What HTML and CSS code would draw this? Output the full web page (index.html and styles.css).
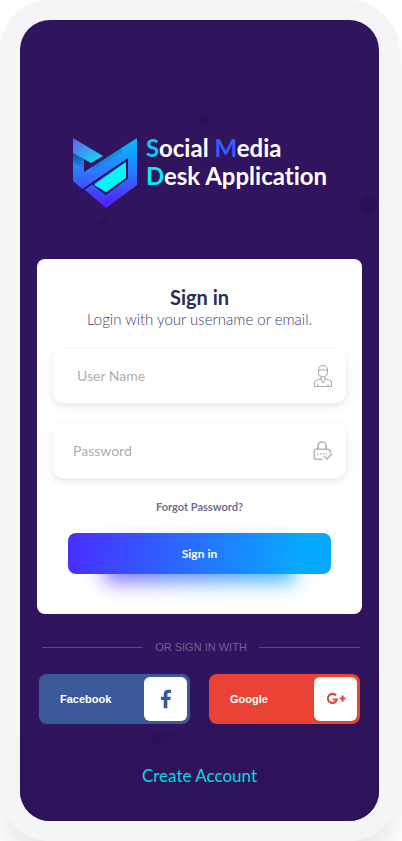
FILE: index.html
```html
<!DOCTYPE html>
<html lang="en">
<head>
<meta charset="utf-8">
<meta name="viewport" content="width=device-width, initial-scale=1">
<title>Sign in</title>
<link rel="stylesheet" href="styles.css">
</head>
<body>
<div class="device">
  <main class="screen">
    <svg class="backdrop" viewBox="0 0 359 801" preserveAspectRatio="none" aria-hidden="true">
      <path d="M0 715Q125 724 235 696T359 650V801H0Z" fill="#2e125a"/>
      <g fill="#2c1057">
        <circle cx="183" cy="100" r="5"/>
        <circle cx="348" cy="185" r="9"/>
        <circle cx="83" cy="202" r="4"/>
        <circle cx="137" cy="719" r="5"/>
      </g>
    </svg>

    <header class="brand">
      <svg class="brand-mark" viewBox="0 0 66 72" aria-hidden="true">
        <defs>
          <linearGradient id="body" gradientUnits="userSpaceOnUse" x1="0" y1="0" x2="0" y2="70">
            <stop offset="0" stop-color="#06bdf8"/>
            <stop offset=".35" stop-color="#1f8eff"/>
            <stop offset=".65" stop-color="#3a5cff"/>
            <stop offset="1" stop-color="#5419ff"/>
          </linearGradient>
          <linearGradient id="wing" x1="0" y1="0" x2="1" y2="1">
            <stop offset=".1" stop-color="#576af2"/>
            <stop offset=".9" stop-color="#12dcf2"/>
          </linearGradient>
          <linearGradient id="shade" gradientUnits="userSpaceOnUse" x1="24" y1="18" x2="30" y2="28">
            <stop offset="0" stop-color="#0f4a86" stop-opacity=".8"/>
            <stop offset="1" stop-color="#0f4a86" stop-opacity="0"/>
          </linearGradient>
          <linearGradient id="shade-left" x1="0" y1="0" x2="0" y2="1">
            <stop offset="0" stop-color="#0f3a80" stop-opacity=".8"/>
            <stop offset="1" stop-color="#0f3a80" stop-opacity="0"/>
          </linearGradient>
        </defs>
        <path d="M1 15L12 21V34L65 0V47L34 70L13 52L9 50L1 43Z" fill="url(#body)"/>
        <path d="M1 15L12 21V31L1 25Z" fill="url(#shade-left)"/>
        <path d="M20 29L50 10V18L20 37Z" fill="url(#shade)"/>
        <path d="M1 0L31 18L19 25L1 15Z" fill="url(#wing)"/>
        <path d="M9 53L55 22V40L34 56L21 46" fill="none" stroke="#281158" stroke-width="2"/>
        <path d="M22 47L54 24V40L34 54Z" fill="#00f8f6"/>
      </svg>
      <h1 class="brand-name"><span class="cyan">S</span>ocial <span class="blue">M</span>edia<br><span class="aqua">D</span>esk Application</h1>
    </header>

    <form class="card">
      <h2 class="card-title">Sign in</h2>
      <p class="card-text">Login with your username or email.</p>

      <label class="field field-user">
        <input type="text" placeholder="User Name" aria-label="User Name" autocomplete="username">
        <svg viewBox="0 0 20 24" aria-hidden="true">
          <path d="M5.500 9V6C5.500 3 7 1.500 10 1.500S14.500 3 14.500 6V9C14.500 11 12.500 13 10 13S5.500 11 5.500 9ZM5.500 6.500C8 5.500 12 5.500 14.500 6.500M8 13V15L10 19L12 15V13M8 15L4 16C2.500 16.500 1.500 17.500 1.500 19V22.500H18.500V19C18.500 17.500 17.500 16.500 16 16L12 15M5 20V22M15 20V22"/>
        </svg>
      </label>

      <label class="field field-pass">
        <input type="password" placeholder="Password" aria-label="Password" autocomplete="current-password">
        <svg class="lock" viewBox="0 0 20 24" aria-hidden="true">
          <path d="M5 10V7C5 4.500 6.700 3 9 3S13 4.500 13 7V10" stroke-width="1.700"/>
          <path d="M17 14V12C17 11 16.200 10.200 15.200 10.200H3C2 10.200 1.200 11 1.200 12V18.500C1.200 19.500 2 20.300 3 20.300H9.500M11 17L14 20.200L19 14.500" stroke-width="1.500"/>
          <path d="M4 15H5.500M7 15H8.500M10 15H11.500M13 15H14" stroke-width="1.500"/>
        </svg>
      </label>

      <a class="forgot" href="#">Forgot Password?</a>
      <button class="submit" type="submit">Sign in</button>
    </form>

    <div class="divider">OR SIGN IN WITH</div>

    <div class="social">
      <button class="social-button facebook" type="button">
        <span>Facebook</span>
        <span class="tile">
          <svg viewBox="0 0 24 24" aria-hidden="true"><path d="M9.500 22V13H6.500V9.500H9.500V7C9.500 3.500 11.500 2 14.500 2H17.500V5.500H15.500C14 5.500 13.500 6.200 13.500 7.500V9.500H17.300L16.700 13H13.500V22Z" fill="#3b5998"/></svg>
        </span>
      </button>
      <button class="social-button google" type="button">
        <span>Google</span>
        <span class="tile">
          <svg viewBox="0 0 24 24" aria-hidden="true"><path d="M12 8.200A5 5 0 1 0 13 12.500H8.500M16 11.500H22.500M19.200 8.200V14.800" fill="none" stroke="#ea4335" stroke-width="2.300"/></svg>
        </span>
      </button>
    </div>

    <a class="create" href="#">Create Account</a>
  </main>
</div>
</body>
</html>
```
FILE: styles.css
```css
* {
  box-sizing: border-box;
}

body {
  margin: 0;
  background: #fff;
  font-family: Lato, "Liberation Sans", sans-serif;
  font-variant-ligatures: none;
}

.device {
  margin-right: 3px;
  padding: 20px;
  border-radius: 50px;
  background: #f3f5f7;
  box-shadow: 0 20px 20px rgba(0, 0, 0, .08);
}

.screen {
  position: relative;
  display: flex;
  flex-direction: column;
  min-height: calc(100vh - 40px);
  padding: 118px 17px 32px;
  overflow: hidden;
  border-radius: 30px;
  background: #30145d;
}

.backdrop {
  position: absolute;
  inset: 0;
  width: 100%;
  height: 100%;
}

.brand,
.card,
.divider,
.social,
.create {
  position: relative;
}

.brand {
  display: flex;
  align-items: flex-start;
  justify-content: center;
  gap: 8px;
  margin-bottom: 49px;
}

.brand-mark {
  width: 66px;
  height: 72px;
}

.brand-name {
  margin: 0;
  margin-top: -4px;
  color: #fff;
  font-size: 24px;
  font-weight: 700;
  line-height: 28px;
}

.cyan {
  color: #16c3f0;
}

.blue {
  color: #355cff;
}

.aqua {
  color: #00eef5;
}

.card {
  display: flex;
  flex-direction: column;
  padding: 26px 16px 40px;
  border-radius: 8px;
  background: #fff;
  text-align: center;
}

.card-title {
  margin: 0;
  color: #2b2c58;
  font-size: 20px;
  line-height: 24px;
}

.card-text {
  margin: 0 0 20px;
  color: #3d3e6b;
  font-size: 15px;
  font-weight: 300;
  line-height: 20px;
}

.field {
  display: flex;
  align-items: center;
  height: 54px;
  margin-bottom: 21px;
  padding-right: 13px;
  border-radius: 10px;
  background: #fff;
  box-shadow: 0 3px 8px rgba(0, 0, 0, .1);
}

.field-user {
  padding-left: 24px;
}

.field-pass {
  padding-left: 20px;
}

.field input {
  flex: 1;
  min-width: 0;
  padding: 0;
  border: 0;
  outline: 0;
  background: none;
  color: #555;
  font: 14px/20px Lato, "Liberation Sans", sans-serif;
}

.field input::placeholder {
  color: #adadad;
  opacity: 1;
}

.field svg {
  width: 20px;
  height: 24px;
  fill: none;
  stroke: #a8a8a8;
}

.field .lock {
  stroke: #b4b4b4;
}

.forgot {
  align-self: center;
  margin-bottom: 18px;
  color: #6e6f91;
  font-size: 11px;
  font-weight: 700;
  line-height: 16px;
  text-decoration: none;
}

.submit {
  position: relative;
  height: 41px;
  margin: 0 15px;
  border: 0;
  border-radius: 8px;
  background: linear-gradient(100deg, #482fff 3%, #08aaff 88%);
  color: #fff;
  font: 700 12px/16px Lato, "Liberation Sans", sans-serif;
  transform-style: preserve-3d;
}

.submit::before {
  content: "";
  position: absolute;
  inset: 12px 36px -8px;
  background: linear-gradient(90deg, #6a50ff, #16b4ff);
  filter: blur(10px);
  opacity: .85;
  transform: translateZ(-1px);
}

.divider {
  display: flex;
  align-items: center;
  gap: 12px;
  margin: 25px 2px 19px 5px;
  color: #75628f;
  font: 11px/16px "Liberation Sans", Arial, sans-serif;
}

.divider::before,
.divider::after {
  content: "";
  flex: 1;
  height: 1px;
  background: #5e4880;
}

.social {
  display: grid;
  grid-template-columns: 1fr 1fr;
  gap: 19px;
  margin: 0 2px 41px;
}

.social-button {
  display: flex;
  align-items: center;
  justify-content: space-between;
  height: 50px;
  padding: 0 3px 0 21px;
  border: 0;
  border-radius: 8px;
  color: #fff;
  font: 700 11px/16px "Liberation Sans", Arial, sans-serif;
}

.facebook {
  background: #3b5998;
}

.google {
  background: #ea4335;
}

.tile {
  display: grid;
  place-items: center;
  width: 43px;
  height: 44px;
  border-radius: 6px;
  background: #fff;
}

.tile svg {
  width: 22px;
  height: 22px;
}

.create {
  align-self: center;
  color: #00dce5;
  font-size: 17px;
  line-height: 22px;
  text-decoration: none;
}
```
